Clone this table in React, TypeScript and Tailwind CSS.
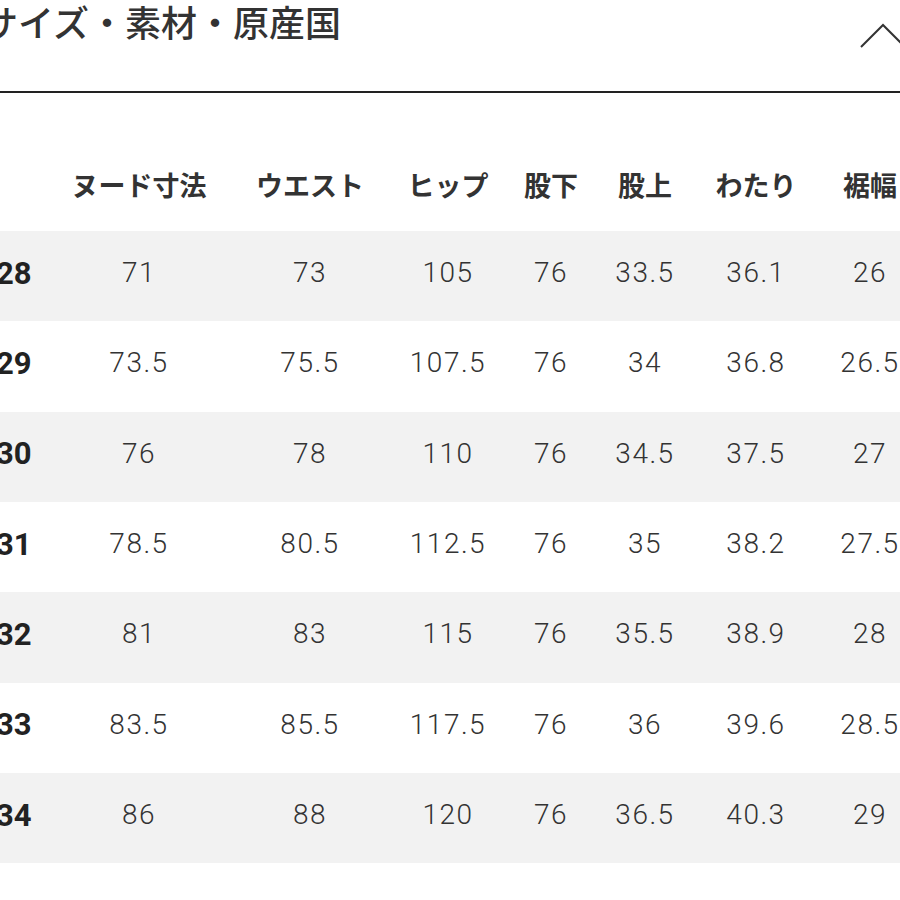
import React from "react";

const cols = ["ヌード寸法", "ウエスト", "ヒップ", "股下", "股上", "わたり", "裾幅"];

const rows: [string, string[]][] = [
  ["28", ["71", "73", "105", "76", "33.5", "36.1", "26"]],
  ["29", ["73.5", "75.5", "107.5", "76", "34", "36.8", "26.5"]],
  ["30", ["76", "78", "110", "76", "34.5", "37.5", "27"]],
  ["31", ["78.5", "80.5", "112.5", "76", "35", "38.2", "27.5"]],
  ["32", ["81", "83", "115", "76", "35.5", "38.9", "28"]],
  ["33", ["83.5", "85.5", "117.5", "76", "36", "39.6", "28.5"]],
  ["34", ["86", "88", "120", "76", "36.5", "40.3", "29"]],
];

const widths = ["w-[150px]", "w-[192px]", "w-[84px]", "w-[122px]", "w-[66px]", "w-[156px]", "w-[72px]"];

export default function App() {
  return (
    <div className="w-[900px] h-[900px] overflow-hidden bg-white">
      <div className="-ml-[40px] w-[950px]">
        <div className="flex items-start justify-between h-[93px] border-b-2 border-[#222]">
          <div
            className="pl-[22px] pt-[3px] text-[36px] leading-none text-[#333] whitespace-nowrap"
            style={{ fontFamily: '"Noto Sans CJK JP", sans-serif', fontWeight: 500 }}
          >
            サイズ・素材・原産国
          </div>
          <svg className="mt-[21px] mr-[3px]" width="48" height="30" viewBox="0 0 48 30" fill="none">
            <polyline points="2,26 24,4 46,26" stroke="#333" strokeWidth="2" />
          </svg>
        </div>

        <div className="mt-[48px]">
          <div className="flex h-[90px] items-center pb-[3px] text-[#333]" style={{ fontFamily: '"Noto Sans CJK JP", sans-serif' }}>
            <div className="w-[104px]" />
            {cols.map((c, i) => (
              <div key={c} className={`${widths[i]} text-center text-[27px] font-bold leading-none whitespace-nowrap`}>
                {c}
              </div>
            ))}
          </div>
          {rows.map(([label, vals], r) => (
            <div
              key={label}
              className={`flex h-[90.33px] items-center pb-[6px] text-[#333] ${r % 2 === 0 ? "bg-[#f2f2f2]" : "bg-white"}`}
              style={{ fontFamily: "Roboto, sans-serif" }}
            >
              <div className="w-[104px] pl-[36px] text-[31px] font-bold leading-none text-[#222]">{label}</div>
              {vals.map((v, i) => (
                <div key={i} className={`${widths[i]} text-center text-[28px] font-light leading-none tracking-[1.5px] whitespace-nowrap`}>
                  {v}
                </div>
              ))}
            </div>
          ))}
        </div>
      </div>
    </div>
  );
}
